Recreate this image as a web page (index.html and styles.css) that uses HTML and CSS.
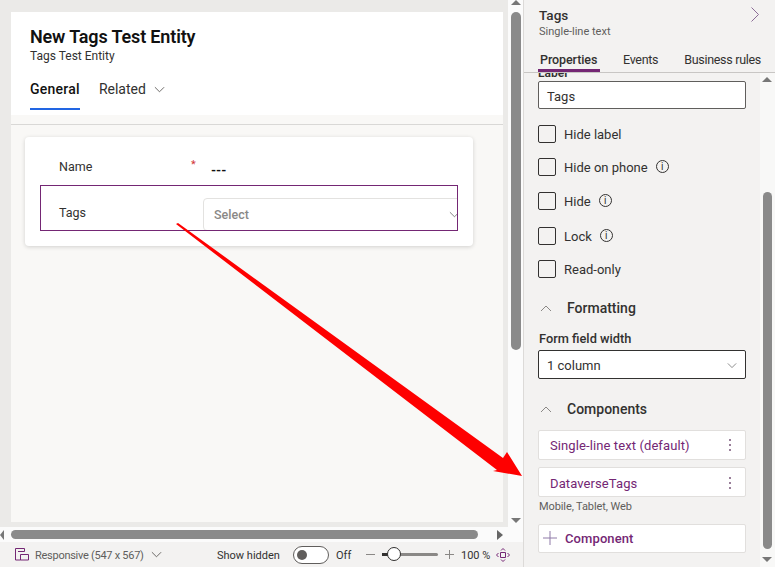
FILE: index.html
```html
<!DOCTYPE html>
<html lang="en">
<head>
  <meta charset="UTF-8" />
  <title>New Tags Test Entity</title>
  <link rel="stylesheet" href="styles.css">
</head>
<body>
  <div class="app">
    <section class="designer">
      <div class="designer-top">
        <div class="canvas">
          <div class="form">
            <header class="form-head">
              <h1>New Tags Test Entity</h1>
              <p>Tags Test Entity</p>
              <nav class="form-tabs">
                <span class="form-tab active">General</span>
                <span class="form-tab">Related
                  <svg class="chev-s" viewBox="0 0 12 7"><path d="M1 1l5 5 5-5"/></svg>
                </span>
              </nav>
            </header>
            <div class="form-body">
              <div class="card">
                <div class="field-name">
                  <span class="field-label">Name</span>
                  <span class="req">*</span>
                  <span class="dashes">---</span>
                </div>
                <div class="field-tags">
                  <span class="field-label">Tags</span>
                  <div class="fake-select">
                    <span>Select</span>
                    <svg class="chev-s" viewBox="0 0 12 7"><path d="M1 1l5 5 5-5"/></svg>
                  </div>
                </div>
              </div>
            </div>
          </div>
        </div>
        <div class="vscroll">
          <span class="arrow-up"></span>
          <span class="vthumb"></span>
          <span class="arrow-down"></span>
        </div>
      </div>
      <div class="hscroll">
        <span class="arrow-left"></span>
        <span class="hthumb"></span>
        <span class="arrow-right"></span>
      </div>
      <footer class="status">
        <svg class="resp-icon" viewBox="0 0 14 13"><path d="M.5.5h9v3M.5.5v11.5h5M5.500 12V6.500h8V12zM3 3.500h6.500"/></svg>
        <span class="resp-text">Responsive (547 x 567)</span>
        <svg class="chev-s resp-chev" viewBox="0 0 12 7"><path d="M1 1l5 5 5-5"/></svg>
        <span class="show-hidden">Show hidden</span>
        <span class="toggle"><i></i></span>
        <span class="off">Off</span>
        <span class="zoom-minus"></span>
        <span class="slider"><i></i></span>
        <svg class="zoom-plus" viewBox="0 0 9 9"><path d="M4.500 0v9M0 4.500h9"/></svg>
        <span class="zoom-val">100 %</span>
        <svg class="fit-icon" viewBox="0 0 14 14"><path d="M4.500 4.500h5v5h-5zM5 2.500L7 .5l2 2M5 11.500l2 2 2-2M2.500 5L.5 7l2 2M11.500 5l2 2-2 2"/></svg>
      </footer>
    </section>

    <aside class="panel">
      <div class="panel-head">
        <div>
          <h2>Tags</h2>
          <p>Single-line text</p>
        </div>
        <svg class="close-chev" viewBox="0 0 8 15"><path d="M.5.5l7 7-7 7"/></svg>
      </div>
      <nav class="panel-tabs">
        <span class="panel-tab active">Properties</span>
        <span class="panel-tab events">Events</span>
        <span class="panel-tab rules">Business rules</span>
      </nav>
      <div class="panel-main">
        <div class="panel-body">
          <label class="clipped-label">Label</label>
          <div class="text-box">Tags</div>
          <div class="checks">
            <div class="check"><span class="box"></span>Hide label</div>
            <div class="check"><span class="box"></span>Hide on phone<span class="info">i</span></div>
            <div class="check"><span class="box"></span>Hide<span class="info">i</span></div>
            <div class="check"><span class="box"></span>Lock<span class="info">i</span></div>
            <div class="check"><span class="box"></span>Read-only</div>
          </div>
          <h3 class="section-title formatting">
            <svg class="chev-up" viewBox="0 0 12 7"><path d="M1 6l5-5 5 5"/></svg>Formatting
          </h3>
          <div class="sub-label">Form field width</div>
          <div class="text-box select-box">1 column
            <svg class="chev-s" viewBox="0 0 12 7"><path d="M1 1l5 5 5-5"/></svg>
          </div>
          <h3 class="section-title components">
            <svg class="chev-up" viewBox="0 0 12 7"><path d="M1 6l5-5 5 5"/></svg>Components
          </h3>
          <div class="comp">Single-line text (default)<span class="dots"><i></i><i></i><i></i></span></div>
          <div class="comp comp-second">DataverseTags<span class="dots"><i></i><i></i><i></i></span></div>
          <div class="comp-note">Mobile, Tablet, Web</div>
          <div class="comp comp-add">
            <svg class="plus" viewBox="0 0 14 14"><path d="M7 0v14M0 7h14"/></svg>Component
          </div>
        </div>
        <div class="panel-scroll">
          <span class="arrow-up"></span>
          <span class="pthumb"></span>
          <span class="arrow-down"></span>
        </div>
      </div>
    </aside>

    <svg class="callout" viewBox="0 0 775 567">
      <polygon points="176,224 178,223 503,458 507,452 522,476 493,471 497,470"/>
    </svg>
  </div>
</body>
</html>
```

FILE: styles.css
```css
:root {
  --purple: #742774;
  --panel: #f3f2f1;
  --canvas: #f9f8f6;
  --gutter: #ebeae8;
  --text: #323130;
  --muted: #605e5c;
  --thumb: #8a8a8a;
}

* {
  margin: 0;
  padding: 0;
  box-sizing: border-box;
}

body {
  font-family: Roboto, "Open Sans", sans-serif;
  font-size: 13px;
  color: var(--text);
  background: var(--panel);
}

svg {
  display: block;
  fill: none;
  stroke: currentColor;
}

.app {
  position: relative;
  display: flex;
  width: 775px;
  height: 567px;
  overflow: hidden;
}

/* left side */
.designer {
  width: 523px;
  display: flex;
  flex-direction: column;
}

.designer-top {
  height: 527px;
  display: flex;
}

.canvas {
  width: 508px;
  padding: 12px 5px 5px 11px;
  background: var(--gutter);
}

.form {
  height: 100%;
  display: flex;
  flex-direction: column;
  background: var(--canvas);
}

.form-head {
  height: 103px;
  padding: 14px 19px 0;
  background: #fff;
}

.form-head h1 {
  font-size: 18px;
  line-height: 21px;
  font-weight: 600;
  letter-spacing: -0.15px;
  color: #111;
}

.form-head p {
  font-size: 12px;
  line-height: 16px;
  margin-top: 1px;
  color: var(--text);
}

.form-tabs {
  display: flex;
  gap: 19px;
  margin-top: 14px;
}

.form-tab {
  display: flex;
  align-items: flex-start;
  gap: 8px;
  height: 32px;
  line-height: 22px;
  font-size: 14px;
  color: var(--text);
}

.form-tab.active {
  font-weight: 500;
  letter-spacing: 0.25px;
  color: #111;
  border-bottom: 2px solid #2266e3;
}

.form-tab .chev-s {
  margin-top: 8px;
  color: var(--muted);
}

.chev-s {
  width: 11px;
  height: 7px;
  color: #777;
}

.form-body {
  flex: 1;
  margin-top: 9px;
  padding: 12px 30px 0 14px;
  border-top: 1px solid #d9d8d6;
}

.card {
  height: 109px;
  padding-top: 16px;
  background: #fff;
  border-radius: 4px;
  box-shadow: 0 1px 4px rgba(0, 0, 0, 0.16);
}

.field-name {
  display: flex;
  align-items: center;
  height: 32px;
  padding: 0 0 6px 34px;
}

.field-label {
  font-size: 12.500px;
  color: var(--text);
}

.field-name .field-label {
  width: 132px;
}

.req {
  width: 20px;
  color: #d13438;
  font-size: 11px;
  margin-top: -4px;
}

.dashes {
  font-size: 13px;
  font-weight: 700;
  margin-top: 8px;
  color: #111;
}

.field-tags {
  display: flex;
  height: 46px;
  margin-left: 15px;
  width: 418px;
  border: 1px solid var(--purple);
  padding-left: 18px;
  overflow: hidden;
}

.field-tags .field-label {
  width: 144px;
  flex: none;
  margin-top: 19px;
}

.fake-select {
  flex: none;
  display: flex;
  align-items: center;
  justify-content: space-between;
  width: 265px;
  height: 33px;
  margin-top: 12px;
  padding: 0 7px 0 10px;
  font-size: 12.500px;
  font-weight: 500;
  color: #8a8886;
  border: 1px solid #e3e2e0;
  border-radius: 4px;
}

/* scrollbars */
.vscroll {
  width: 15px;
  position: relative;
  background: #fbfbfb;
}

.vthumb {
  display: block;
  width: 10px;
  height: 338px;
  margin: 12px 0 0 3px;
  background: var(--thumb);
  border-radius: 5px;
}

.arrow-up,
.arrow-down {
  position: absolute;
  left: 3px;
  width: 0;
  height: 0;
  border-left: 5px solid transparent;
  border-right: 5px solid transparent;
}

.arrow-up {
  top: 0;
  border-bottom: 5px solid #777;
}

.arrow-down {
  bottom: 4px;
  border-top: 5px solid #777;
}

.hscroll {
  position: relative;
  height: 15px;
  background: #fbfbfb;
  padding: 3px 0 0 11px;
}

.hthumb {
  display: block;
  width: 467px;
  height: 9px;
  background: var(--thumb);
  border-radius: 5px;
}

.arrow-left,
.arrow-right {
  position: absolute;
  top: 3px;
  width: 0;
  height: 0;
  border-top: 5px solid transparent;
  border-bottom: 5px solid transparent;
}

.arrow-left {
  left: 0;
  border-right: 4px solid #777;
}

.arrow-right {
  left: 497px;
  border-left: 6px solid #666;
}

/* status bar */
.status {
  flex: 1;
  display: flex;
  align-items: center;
  padding-left: 15px;
  font-size: 11px;
  line-height: 14px;
  color: var(--text);
  background: var(--panel);
}

.status > span:not(.toggle):not(.slider):not(.zoom-minus) {
  padding-top: 2px;
}

.resp-icon {
  width: 14px;
  height: 13px;
  color: var(--purple);
}

.resp-text {
  width: 108px;
  margin-left: 6px;
  white-space: nowrap;
  letter-spacing: -0.27px;
  color: var(--muted);
}

.resp-chev {
  margin-left: 8px;
  color: var(--muted);
}

.show-hidden {
  width: 62px;
  margin-left: 55px;
  white-space: nowrap;
}

.toggle {
  width: 36px;
  height: 18px;
  margin-left: 14px;
  padding: 3px;
  background: #fff;
  border: 1px solid var(--muted);
  border-radius: 9px;
}

.toggle i {
  display: block;
  width: 10px;
  height: 10px;
  background: var(--muted);
  border-radius: 50%;
}

.off {
  width: 16px;
  margin-left: 7px;
}

.zoom-minus {
  width: 9px;
  height: 1px;
  margin-left: 14px;
  background: #8a8886;
}

.slider {
  position: relative;
  width: 56px;
  height: 3px;
  margin-left: 7px;
  background: #8a8886;
  border-radius: 2px;
}

.slider::before {
  content: "";
  display: block;
  width: 12px;
  height: 3px;
  background: var(--text);
}

.slider i {
  position: absolute;
  left: 5px;
  top: -6px;
  width: 14px;
  height: 14px;
  background: #fff;
  border: 1px solid var(--text);
  border-radius: 50%;
}

.zoom-plus {
  width: 9px;
  height: 9px;
  margin-left: 7px;
  color: #8a8886;
}

.zoom-val {
  width: 30px;
  margin-left: 7px;
  white-space: nowrap;
}

.fit-icon {
  width: 14px;
  height: 14px;
  margin-left: 5px;
  color: var(--purple);
}

/* right panel */
.panel {
  width: 252px;
  display: flex;
  flex-direction: column;
  background: var(--panel);
  border-left: 1px solid #dcdad8;
}

.panel-head {
  height: 46px;
  display: flex;
  justify-content: space-between;
  padding: 7px 16px 0 15px;
}

.panel-head h2 {
  font-size: 13.500px;
  line-height: 17px;
  font-weight: 500;
}

.panel-head p {
  font-size: 11px;
  line-height: 16px;
  color: var(--muted);
}

.close-chev {
  width: 8px;
  height: 15px;
  color: #8b6c96;
}

.panel-tabs {
  display: flex;
  height: 27px;
  padding-left: 14px;
  font-size: 12.500px;
  letter-spacing: -0.3px;
  border-bottom: 1px solid #c8c6c4;
}

.panel-tab {
  height: 26px;
  line-height: 27px;
  white-space: nowrap;
}

.panel-tab.active {
  width: 62px;
  padding-left: 2px;
  border-bottom: 3px solid var(--purple);
  font-weight: 500;
  letter-spacing: -0.1px;
}

.panel-tab.events {
  margin-left: 23px;
}

.panel-tab.rules {
  margin-left: 26px;
}

.panel-main {
  flex: 1;
  display: flex;
  min-height: 0;
}

.panel-body {
  width: 236px;
  padding: 0 0 0 14px;
  overflow: hidden;
}

/* scrolled almost out of view in the panel */
.clipped-label {
  display: block;
  height: 8px;
  overflow: hidden;
  line-height: 0;
  font-size: 12px;
  font-weight: 600;
}

.text-box {
  display: flex;
  align-items: center;
  justify-content: space-between;
  width: 208px;
  height: 28px;
  padding: 2px 8px 0;
  background: #fff;
  border: 1px solid var(--muted);
  border-radius: 2px;
}

.checks {
  display: grid;
  grid-template-rows: 33px 34px 35px 33px 18px;
  margin-top: 16px;
}

.check {
  display: flex;
  align-items: flex-start;
  line-height: 20px;
  color: var(--text);
}

.box {
  flex: none;
  width: 18px;
  height: 18px;
  margin-right: 8px;
  border: 1px solid var(--text);
  border-radius: 2px;
}

.info {
  width: 13px;
  height: 13px;
  margin: 2px 0 0 8px;
  font-size: 10px;
  line-height: 11px;
  text-align: center;
  border: 1px solid var(--text);
  border-radius: 50%;
}

.section-title {
  display: flex;
  align-items: center;
  height: 18px;
  font-size: 14px;
  font-weight: 500;
}

.formatting {
  margin-top: 21px;
}

.components {
  margin-top: 21px;
}

.chev-up {
  width: 12px;
  height: 7px;
  margin: 0 15px 0 2px;
  color: #8a8886;
}

.sub-label {
  margin: 13px 0 3px 1px;
  height: 17px;
  line-height: 17px;
  font-size: 12.800px;
  font-weight: 500;
}

.select-box {
  height: 29px;
  padding-top: 1px;
  border-color: var(--text);
}

.select-box .chev-s {
  width: 10px;
}

.comp {
  display: flex;
  align-items: center;
  justify-content: space-between;
  width: 208px;
  height: 30px;
  margin-top: 12px;
  padding: 1px 12px 0 11px;
  letter-spacing: 0.1px;
  color: var(--purple);
  background: #fff;
  border: 1px solid #e1dfdd;
  border-radius: 2px;
}

.comp-second {
  margin-top: 7px;
  padding-top: 3px;
}

.dots {
  display: flex;
  flex-direction: column;
  gap: 3px;
  margin: -2px 2px 0 0;
}

.dots i {
  width: 2px;
  height: 2px;
  background: #9a7f9a;
}

.comp-note {
  margin: 2px 0 0 1px;
  height: 16px;
  line-height: 16px;
  font-size: 11px;
  letter-spacing: -0.1px;
  color: var(--muted);
}

.comp-add {
  justify-content: flex-start;
  margin-top: 9px;
  padding: 0 0 1px 4px;
  height: 29px;
  font-weight: 500;
}

.plus {
  width: 14px;
  height: 14px;
  margin-right: 8px;
  color: #8f7aa8;
}

.panel-scroll {
  position: relative;
  width: 15px;
  background: #f8f8f7;
}

.panel-scroll .arrow-up {
  top: 4px;
  left: 2px;
}

.panel-scroll .arrow-down {
  bottom: 5px;
  left: 2px;
}

.pthumb {
  position: absolute;
  top: 119px;
  left: 3px;
  width: 9px;
  height: 357px;
  background: var(--thumb);
  border-radius: 5px;
}

/* red callout arrow over everything */
.callout {
  position: absolute;
  top: 0;
  left: 0;
  width: 775px;
  height: 567px;
  stroke: none;
  fill: #fe0000;
  pointer-events: none;
}
```
